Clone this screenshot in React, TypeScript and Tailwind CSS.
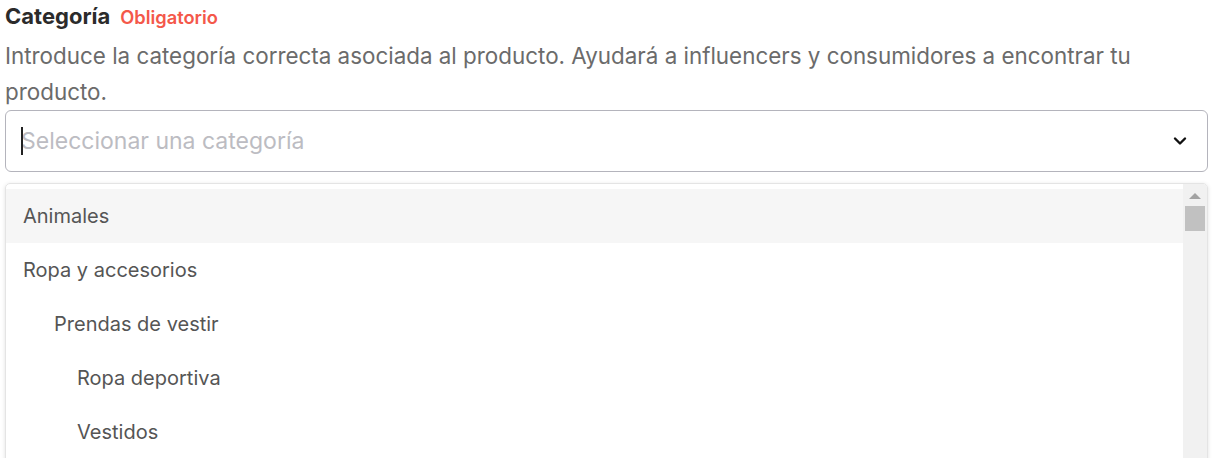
import React from "react";

const items = [
  { label: "Animales", indent: "pl-[17px]", active: true },
  { label: "Ropa y accesorios", indent: "pl-[17px]" },
  { label: "Prendas de vestir", indent: "pl-[48px]" },
  { label: "Ropa deportiva", indent: "pl-[71px]" },
  { label: "Vestidos", indent: "pl-[71px]" },
];

const App = () => {
  return (
    <div className="h-[458px] w-[1214px] overflow-hidden bg-white font-['Inter',sans-serif]">
      <div className="pl-[5px] pr-[6px] pt-[3px]">
        <div className="flex items-baseline gap-[10px]">
          <h3 className="text-[22px] font-bold leading-[26px] text-[#2b2b2b]">Categoría</h3>
          <span className="text-[18.3px] font-semibold text-[#f4584a]">Obligatorio</span>
        </div>
        <p className="mt-[7px] text-[22.4px] leading-[36px] text-[#6b6b6b]">
          Introduce la categoría correcta asociada al producto. Ayudará a influencers y consumidores a encontrar tu
          producto.
        </p>

        <div className="flex h-[62px] items-center rounded-[6px] border border-[#b4b4bc] pl-[15px] pr-[20px]">
          <span className="relative flex-1 text-[23px] text-[#bcbcc2]">
            <span className="absolute left-0 top-[3px] h-[28px] w-[2px] bg-[#222]" />
            Seleccionar una categoría
          </span>
          <svg width="14" height="10" viewBox="0 0 14 10" fill="none">
            <path d="M2 2.5 7 7.5 12 2.5" stroke="#111" strokeWidth="2.4" strokeLinecap="round" strokeLinejoin="round" />
          </svg>
        </div>

        <div className="mt-[11px] flex h-[300px] overflow-hidden rounded-[5px] border border-[#e4e4e4] shadow-[0_1px_4px_rgba(0,0,0,0.12)]">
          <ul className="flex-1 pt-[5px]">
            {items.map((it) => (
              <li
                key={it.label}
                className={`flex h-[54px] items-center text-[20px] text-[#555] ${it.indent} ${it.active ? "bg-[#f6f6f6]" : ""}`}
              >
                {it.label}
              </li>
            ))}
          </ul>
          <div className="flex w-[24px] flex-col items-center bg-[#f1f1f1]">
            <div className="mt-[9px] h-0 w-0 border-x-[6px] border-b-[6px] border-x-transparent border-b-[#a3a3a3]" />
            <div className="mt-[7px] h-[25px] w-[20px] bg-[#c1c1c1]" />
          </div>
        </div>
      </div>
    </div>
  );
};

export default App;
